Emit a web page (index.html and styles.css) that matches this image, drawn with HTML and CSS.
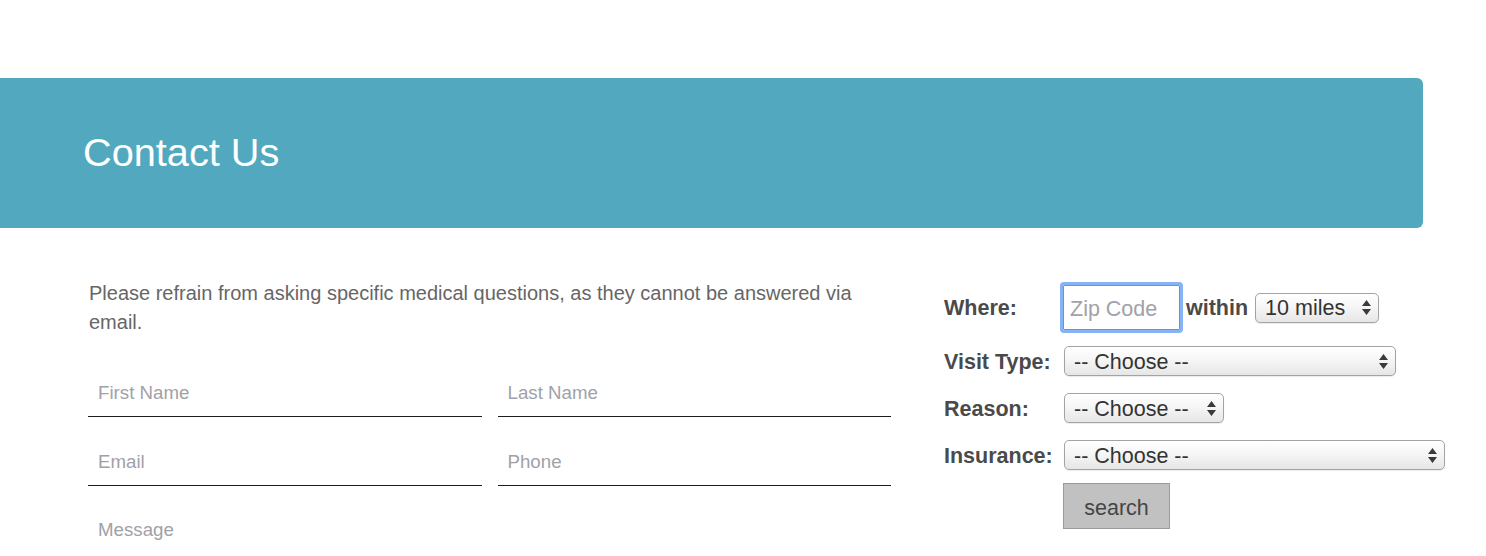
FILE: index.html
```html
<!DOCTYPE html>
<html lang="en">
<head>
<meta charset="utf-8">
<title>Contact Us</title>
<link rel="stylesheet" href="styles.css">
</head>
<body>
<div class="page">
  <header class="banner">
    <h1 class="banner-title">Contact Us</h1>
  </header>
  <main class="content">
    <section class="contact">
      <p class="note">Please refrain from asking specific medical questions, as they cannot be answered via email.</p>
      <form class="contact-form">
        <div class="form-row">
          <input class="field" type="text" placeholder="First Name">
          <input class="field" type="text" placeholder="Last Name">
        </div>
        <div class="form-row">
          <input class="field" type="email" placeholder="Email">
          <input class="field" type="tel" placeholder="Phone">
        </div>
        <textarea class="field message" placeholder="Message"></textarea>
      </form>
    </section>
    <aside class="finder">
      <div class="finder-row row-where">
        <span class="finder-label">Where:</span>
        <input class="zip" type="text" placeholder="Zip Code">
        <span class="within">within</span>
        <span class="select w-miles"><span class="select-text">10 miles</span><svg class="arrows" width="9" height="15" viewBox="0 0 9 15"><path d="M4.5 0 L9 6 L0 6 Z M0 9 L9 9 L4.5 15 Z" fill="#3a3a3a"/></svg></span>
      </div>
      <div class="finder-row row-visit">
        <span class="finder-label">Visit Type:</span>
        <span class="select w-visit"><span class="select-text">-- Choose --</span><svg class="arrows" width="9" height="15" viewBox="0 0 9 15"><path d="M4.5 0 L9 6 L0 6 Z M0 9 L9 9 L4.5 15 Z" fill="#3a3a3a"/></svg></span>
      </div>
      <div class="finder-row row-reason">
        <span class="finder-label">Reason:</span>
        <span class="select w-reason"><span class="select-text">-- Choose --</span><svg class="arrows" width="9" height="15" viewBox="0 0 9 15"><path d="M4.5 0 L9 6 L0 6 Z M0 9 L9 9 L4.5 15 Z" fill="#3a3a3a"/></svg></span>
      </div>
      <div class="finder-row row-insurance">
        <span class="finder-label">Insurance:</span>
        <span class="select w-insurance"><span class="select-text">-- Choose --</span><svg class="arrows" width="9" height="15" viewBox="0 0 9 15"><path d="M4.5 0 L9 6 L0 6 Z M0 9 L9 9 L4.5 15 Z" fill="#3a3a3a"/></svg></span>
      </div>
      <div class="finder-row row-search">
        <span class="finder-label"></span>
        <button class="search-btn" type="button">search</button>
      </div>
    </aside>
  </main>
</div>
</body>
</html>
```

FILE: styles.css
```css
* { box-sizing: border-box; }

html, body {
  margin: 0;
  padding: 0;
  background: #ffffff;
  font-family: "Liberation Sans", Arial, Helvetica, sans-serif;
  overflow: hidden;
}

.page {
  padding-top: 78px;
  width: 1486px;
  height: 556px;
  overflow: hidden;
}

.banner {
  width: 1423px;
  height: 150px;
  background: #52a9bf;
  border-radius: 0 6px 6px 0;
  display: flex;
  align-items: center;
  padding-left: 83px;
}

.banner-title {
  margin: 0;
  font-size: 39.7px;
  font-weight: normal;
  color: #ffffff;
  line-height: 1;
  padding-bottom: 1px;
}

.content {
  display: flex;
  padding-top: 51px;
}

.contact {
  margin-left: 88px;
  width: 803px;
  flex: 0 0 803px;
}

.note {
  margin: 0 0 32px 0;
  font-size: 20px;
  line-height: 29px;
  color: #666666;
  padding-left: 1px;
}

.contact-form {
  display: flex;
  flex-direction: column;
  gap: 21px;
}

.form-row {
  display: flex;
  gap: 16px;
}

.field {
  font-family: "Liberation Sans", Arial, Helvetica, sans-serif;
  font-size: 18.7px;
  color: #333;
  border: none;
  border-bottom: 1px solid #1c1c1c;
  background: transparent;
  height: 48px;
  padding: 0 10px;
  outline: none;
  flex: 1 1 0;
  min-width: 0;
}

.field::placeholder { color: #a1a1a9; }

.message {
  display: block;
  flex: none;
  width: 100%;
  height: 48px;
  resize: none;
  padding: 12px 10px 0;
  line-height: 22px;
  border-bottom: none;
  overflow: hidden;
}

.finder {
  margin-left: 53px;
  padding-top: 6px;
  display: flex;
  flex-direction: column;
}

.finder-row {
  display: flex;
  align-items: center;
}

.row-visit { margin-top: 16px; }
.row-reason { margin-top: 17px; }
.row-insurance { margin-top: 17px; }
.row-search { margin-top: 13px; }

.finder-label {
  width: 120px;
  flex: 0 0 120px;
  font-size: 21.5px;
  font-weight: bold;
  color: #4a4a4a;
  line-height: 1;
  padding-top: 3px;
}

.zip {
  width: 117px;
  height: 45px;
  margin-left: -1px;
  border: 1px solid #8e8e8e;
  outline: 3px solid #86b2f6;
  outline-offset: 0;
  border-radius: 1px;
  font-family: "Liberation Sans", Arial, Helvetica, sans-serif;
  font-size: 21.5px;
  padding: 3px 6px 0;
  color: #333;
  background: #fff;
}

.zip::placeholder { color: #a1a1a9; }

.within {
  margin-left: 6px;
  font-size: 21.5px;
  font-weight: bold;
  color: #4a4a4a;
  line-height: 1;
  padding-top: 3px;
}

.select {
  position: relative;
  display: flex;
  align-items: center;
  height: 30px;
  border: 1px solid #a3a3a3;
  border-radius: 5px;
  background: linear-gradient(#ffffff 0%, #f6f6f6 45%, #e6e6e6 100%);
  box-shadow: 0 1px 1px rgba(0, 0, 0, 0.08);
  padding-left: 9px;
}

.select-text {
  font-size: 21.5px;
  color: #333333;
  line-height: 1;
  padding-top: 3px;
}

.arrows {
  position: absolute;
  right: 7px;
  top: 50%;
  margin-top: -7.5px;
}

.w-miles { width: 124px; margin-left: 7px; }
.w-visit { width: 332px; }
.w-reason { width: 160px; }
.w-insurance { width: 381px; }

.search-btn {
  width: 107px;
  height: 46px;
  background: #c1c1c1;
  border: 1px solid #9b9b9b;
  border-radius: 0;
  font-family: "Liberation Sans", Arial, Helvetica, sans-serif;
  font-size: 21.5px;
  color: #454545;
  padding: 4px 0 0;
  margin-left: -1px;
}
```
